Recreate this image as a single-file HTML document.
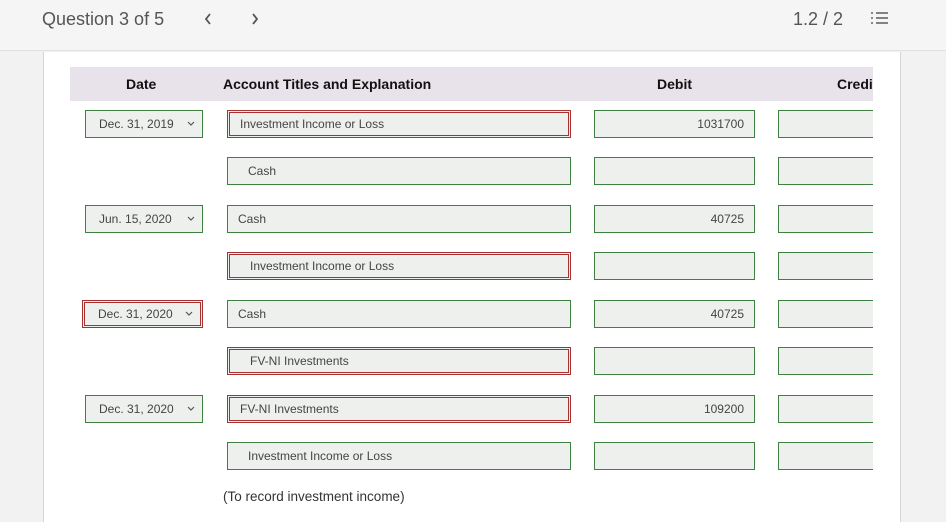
<!DOCTYPE html>
<html><head><style>
*{box-sizing:border-box;margin:0;padding:0}
body{width:946px;height:521px;overflow:hidden;background:#f1f2f1;font-family:"Liberation Sans",sans-serif;position:relative}
.hdr{position:absolute;left:0;top:0;width:946px;height:51px;background:#f4f5f4;border-bottom:1px solid #e0e0e0}
.t{position:absolute;color:#555;font-size:18px}
.panel{position:absolute;left:43px;top:52px;width:858px;height:470px;background:#fff;border-left:1px solid #d6d6d6;border-right:1px solid #d6d6d6}
.th{position:absolute;left:70px;top:67px;width:803px;height:34px;background:#e8e3ea}
.th b{position:absolute;top:9px;font-size:14px;color:#111}
.box{position:absolute;height:28px;border:1px solid #3f7f3f;background:#eef0ee;font-size:12px;color:#444;line-height:26px;padding:0 10px;overflow:hidden;white-space:nowrap}
.red{border:3px double #a83232;line-height:22px}
.num{text-align:right}
.sel svg{position:absolute;right:7px;top:10px}
.clip{position:absolute;left:0;top:0;width:873px;height:521px;overflow:hidden}
</style></head><body>
<div class="hdr"></div>
<div class="t" style="left:42px;top:9px">Question 3 of 5</div>
<svg style="position:absolute;left:204px;top:13px" width="8" height="12"><path d="M6 1L2 6l4 5" fill="none" stroke="#555" stroke-width="1.8"/></svg>
<svg style="position:absolute;left:251px;top:13px" width="8" height="12"><path d="M2 1l4 5-4 5" fill="none" stroke="#555" stroke-width="1.8"/></svg>
<div class="t" style="left:793px;top:9px">1.2 / 2</div>
<svg style="position:absolute;left:870px;top:11px" width="18" height="16"><g stroke="#666" stroke-width="1.6"><line x1="6" y1="2" x2="18" y2="2"/><line x1="6" y1="7" x2="18" y2="7"/><line x1="6" y1="12" x2="18" y2="12"/></g><g fill="#888"><rect x="1" y="1" width="2" height="2"/><rect x="1" y="6" width="2" height="2"/><rect x="1" y="11" width="2" height="2"/></g></svg>
<div class="panel"></div>
<div class="clip">
<div class="th"><b style="left:56px">Date</b><b style="left:153px">Account Titles and Explanation</b><b style="left:587px">Debit</b><b style="left:767px">Credit</b></div>

<div class="box sel" style="left:85px;top:110px;width:118px;padding-left:13px">Dec. 31, 2019<svg width="8" height="6"><path d="M1 1l3 3 3-3" fill="none" stroke="#555" stroke-width="1.2"/></svg></div>
<div class="box red" style="left:227px;top:110px;width:344px">Investment Income or Loss</div>
<div class="box num" style="left:594px;top:110px;width:161px">1031700</div>
<div class="box" style="left:778px;top:110px;width:120px"></div>

<div class="box" style="left:227px;top:157px;width:344px;padding-left:20px">Cash</div>
<div class="box" style="left:594px;top:157px;width:161px"></div>
<div class="box" style="left:778px;top:157px;width:120px"></div>

<div class="box sel" style="left:85px;top:205px;width:118px;padding-left:13px">Jun. 15, 2020<svg width="8" height="6"><path d="M1 1l3 3 3-3" fill="none" stroke="#555" stroke-width="1.2"/></svg></div>
<div class="box" style="left:227px;top:205px;width:344px">Cash</div>
<div class="box num" style="left:594px;top:205px;width:161px">40725</div>
<div class="box" style="left:778px;top:205px;width:120px"></div>

<div class="box red" style="left:227px;top:252px;width:344px;padding-left:20px">Investment Income or Loss</div>
<div class="box" style="left:594px;top:252px;width:161px"></div>
<div class="box" style="left:778px;top:252px;width:120px"></div>

<div class="box sel red" style="left:82px;top:300px;width:121px;padding-left:13px">Dec. 31, 2020<svg width="8" height="6" style="top:8px"><path d="M1 1l3 3 3-3" fill="none" stroke="#555" stroke-width="1.2"/></svg></div>
<div class="box" style="left:227px;top:300px;width:344px">Cash</div>
<div class="box num" style="left:594px;top:300px;width:161px">40725</div>
<div class="box" style="left:778px;top:300px;width:120px"></div>

<div class="box red" style="left:227px;top:347px;width:344px;padding-left:20px">FV-NI Investments</div>
<div class="box" style="left:594px;top:347px;width:161px"></div>
<div class="box" style="left:778px;top:347px;width:120px"></div>

<div class="box sel" style="left:85px;top:395px;width:118px;padding-left:13px">Dec. 31, 2020<svg width="8" height="6"><path d="M1 1l3 3 3-3" fill="none" stroke="#555" stroke-width="1.2"/></svg></div>
<div class="box red" style="left:227px;top:395px;width:344px">FV-NI Investments</div>
<div class="box num" style="left:594px;top:395px;width:161px">109200</div>
<div class="box" style="left:778px;top:395px;width:120px"></div>

<div class="box" style="left:227px;top:442px;width:344px;padding-left:20px">Investment Income or Loss</div>
<div class="box" style="left:594px;top:442px;width:161px"></div>
<div class="box" style="left:778px;top:442px;width:120px"></div>

<div style="position:absolute;left:223px;top:489px;font-size:13.5px;color:#333">(To record investment income)</div>
</div>
</body></html>
